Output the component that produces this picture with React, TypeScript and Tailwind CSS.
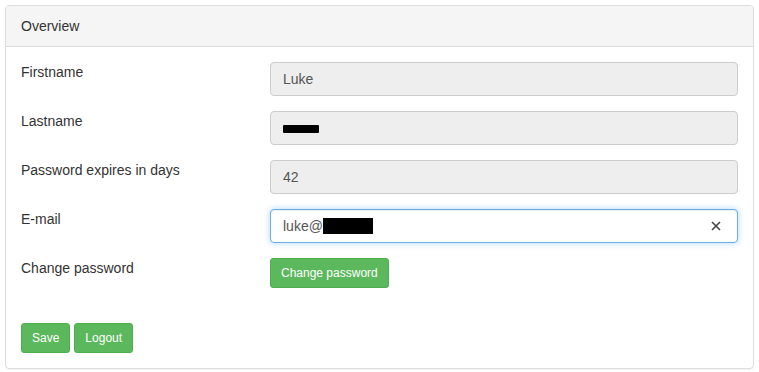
import React from 'react';

const inputBase =
  'flex-1 h-[34px] rounded-[4px] border px-[12px] flex items-center text-[14px] text-[#555]';

const Row: React.FC<{ label: string; children: React.ReactNode; last?: boolean }> = ({
  label,
  children,
  last,
}) => (
  <div className={`flex ${last ? '' : 'mb-[15px]'}`}>
    <div className="w-[249px] shrink-0 text-[14px] leading-[20px] text-[#333]">{label}</div>
    <div className="flex-1 flex">{children}</div>
  </div>
);

export default function App() {
  return (
    <div className="p-[5px] bg-white" style={{ fontFamily: '"Liberation Sans", Arial, sans-serif' }}>
      <div className="border border-[#ddd] rounded-[4px] shadow-[0_1px_1px_rgba(0,0,0,0.05)]">
        <div className="bg-[#f5f5f5] border-b border-[#ddd] rounded-t-[3px] px-[15px] py-[10px] text-[14px] leading-[20px] text-[#333]">
          Overview
        </div>
        <div className="p-[15px]">
          <Row label="Firstname">
            <div className={`${inputBase} bg-[#eee] border-[#ccc]`}>Luke</div>
          </Row>
          <Row label="Lastname">
            <div className={`${inputBase} bg-[#eee] border-[#ccc]`}>
              <span className="inline-block w-[36px] h-[8px] bg-black rounded-[1px] mt-[2px]"></span>
            </div>
          </Row>
          <Row label="Password expires in days">
            <div className={`${inputBase} bg-[#eee] border-[#ccc]`}>42</div>
          </Row>
          <Row label="E-mail">
            <div
              className={`${inputBase} bg-white border-[#66afe9] shadow-[inset_0_1px_1px_rgba(0,0,0,0.075),0_0_6px_rgba(102,175,233,0.5)]`}
            >
              <span>luke@</span>
              <span className="inline-block w-[50px] h-[16px] bg-black"></span>
              <span className="ml-auto text-[#444] mr-[4px]">
                <svg width="10" height="10" viewBox="0 0 10 10" stroke="currentColor" strokeWidth="1.6">
                  <path d="M1 1L9 9M9 1L1 9" />
                </svg>
              </span>
            </div>
          </Row>
          <Row label="Change password" last>
            <button className="h-[30px] px-[10px] rounded-[3px] bg-[#5cb85c] border border-[#4cae4c] text-white text-[12px] leading-[18px]">
              Change password
            </button>
          </Row>
          <div className="mt-[35px] flex gap-[4px]">
            <button className="h-[30px] px-[10px] rounded-[3px] bg-[#5cb85c] border border-[#4cae4c] text-white text-[12px] leading-[18px]">
              Save
            </button>
            <button className="h-[30px] px-[10px] rounded-[3px] bg-[#5cb85c] border border-[#4cae4c] text-white text-[12px] leading-[18px]">
              Logout
            </button>
          </div>
        </div>
      </div>
    </div>
  );
}
